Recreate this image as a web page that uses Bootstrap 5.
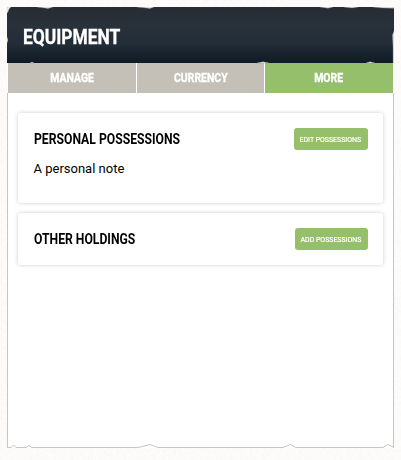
<!DOCTYPE html>
<html lang="en">
<head>
<meta charset="utf-8">
<meta name="viewport" content="width=device-width, initial-scale=1">
<title>Equipment</title>
<link href="https://cdn.jsdelivr.net/npm/bootstrap@5.3.0/dist/css/bootstrap.min.css" rel="stylesheet">
<style>
body{background:#fdfcfb;font-family:Roboto,sans-serif;color:#000;height:460px;overflow:hidden}
.paper-grain{inset:0;z-index:-1}
.sheet{width:387px;height:441px;margin:7px 0 0 7px}
.sheet-head{height:56px;padding-left:15.5px;background:linear-gradient(#272c34 0,#29313a 35%,#222d38 65%,#101a24 100%)}
.torn{left:0;top:0}
.cond{display:inline-block;white-space:nowrap;transform-origin:0 50%;font-weight:700}
.head-title{font-size:20px;line-height:24px;color:#fff;transform:scaleX(.87);margin-top:3px;-webkit-text-stroke:.3px #fff}
.tabs-row{gap:1px;padding:0 1px;height:30px;background:#fff}
.tab-item{flex:1 1 0;background:#c4c0b8;color:#fff;font-size:12px;line-height:29px;text-align:center;border:0;padding:0}
.tab-item.active{background:#96bf6b}
.tab-item .cond{transform-origin:50% 50%;transform:scaleX(.87);-webkit-text-stroke:.35px #fff}
.tab-item.active .cond{margin-right:1px}
.sheet-body{height:355px;background:#fff;border:1px solid #c8c6c3;border-top:0;border-bottom:0;padding:20px 10px 0}
.panel-box{background:#fff;border-radius:3px;box-shadow:0 0 4px rgba(0,0,0,.2);padding:15px 15px 0}
.box-a{height:90px;margin-bottom:10px}
.box-b{height:52px}
.box-title{font-size:14px;line-height:22px;transform:scaleX(.87);margin:0 0 0 .7px}
.note{font-size:13px;line-height:20px;margin:9px 0 0;padding-left:.5px}
.act{height:22px;background:#96bf6b;color:#fff;border:0;border-radius:3px;font-size:8px;line-height:23px;padding:0 1px 0 0;text-align:center;white-space:nowrap}
.act span{display:inline-block;margin:0 -10px;transform:scaleX(.87);-webkit-text-stroke:.2px #fff}
.act-a{width:74px}.act-b{width:73px}
</style>
<script src="https://cdn.jsdelivr.net/npm/bootstrap@5.3.0/dist/js/bootstrap.bundle.min.js"></script>
</head>
<body>
<svg class="paper-grain position-absolute" width="401" height="460" aria-hidden="true">
<filter id="grain"><feTurbulence type="fractalNoise" baseFrequency=".3" numOctaves="3"/><feColorMatrix values="0 0 0 0 .72  0 0 0 0 .68  0 0 0 0 .6  .24 0 0 0 -.09"/></filter>
<rect width="401" height="460" filter="url(#grain)"/>
</svg>
<main class="sheet position-relative">
<header class="sheet-head d-flex align-items-center"><h1 class="head-title cond mb-0">EQUIPMENT</h1></header>
<nav class="tabs-row d-flex">
<button class="tab-item"><span class="cond">MANAGE</span></button>
<button class="tab-item"><span class="cond">CURRENCY</span></button>
<button class="tab-item active"><span class="cond">MORE</span></button>
</nav>
<div class="sheet-body">
<section class="panel-box box-a">
<div class="d-flex justify-content-between"><h2 class="box-title cond">PERSONAL POSSESSIONS</h2><button class="act act-a"><span>EDIT POSSESSIONS</span></button></div>
<p class="note">A personal note</p>
</section>
<section class="panel-box box-b">
<div class="d-flex justify-content-between"><h2 class="box-title cond">OTHER HOLDINGS</h2><button class="act act-b"><span>ADD POSSESSIONS</span></button></div>
</section>
</div>
<!-- torn edges of the header and the notched bottom rule -->
<svg class="torn position-absolute pe-none" width="387" height="442" aria-hidden="true">
<g fill="#f0efed" stroke="#8d9196" stroke-opacity=".5" stroke-width=".6">
<path d="M0 0H4L2 2L1 5L0 6ZM30 0H46L41 1.500L36 .8ZM130 0H147L143 1.500L137 .8ZM313 0H326L321 1.200ZM337 0H351L345 .9ZM366 0H387V1.300L376 .9ZM387 24L385.500 28L385.800 35L386 40V56H387ZM0 30L1 33L0 36ZM23 56L25 55L27 56ZM250 56L256 54.800L262 56ZM359 56L363 54.700L368 56Z"/>
</g>
<path d="M0 440.500H4L6.500 438L9 440.500H19L22 438.500L25 440.500H131L143 437.500L151 440.500H276L283.500 437.500L289 440.500H376L380.500 437.500L386.500 440" fill="none" stroke="#c8c6c3"/>
</svg>
</main>
</body>
</html>
